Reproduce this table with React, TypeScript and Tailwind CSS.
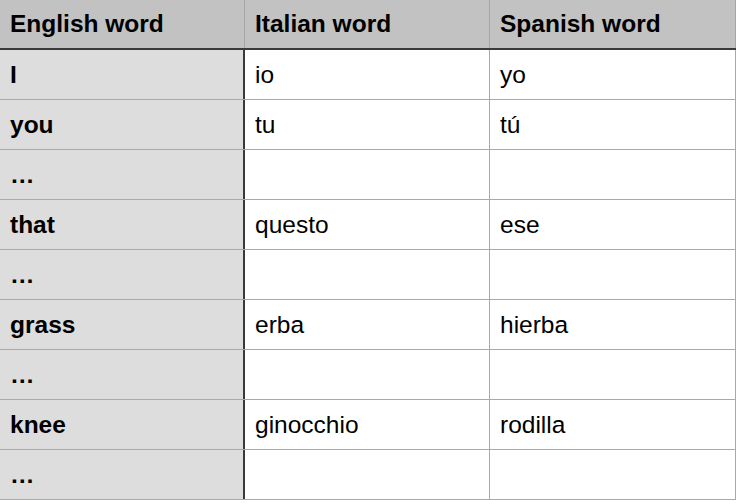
const rows: [string, string, string][] = [
  ["I", "io", "yo"],
  ["you", "tu", "tú"],
  ["...", "", ""],
  ["that", "questo", "ese"],
  ["...", "", ""],
  ["grass", "erba", "hierba"],
  ["...", "", ""],
  ["knee", "ginocchio", "rodilla"],
  ["...", "", ""],
];

const font = { fontFamily: '"Liberation Sans", Arial, sans-serif' };

export default function App() {
  return (
    <div className="w-[736px] h-[504px] bg-white text-[24.5px] text-black" style={font}>
      <div className="flex h-[50px] bg-[#c1c2c1] border-b-2 border-[#3a3a3a] font-bold">
        <div className="w-[245px] flex items-center pl-[10px] border-r border-[#a5a6a5]">English word</div>
        <div className="w-[245px] flex items-center pl-[10px] border-r border-[#a5a6a5]">Italian word</div>
        <div className="w-[246px] flex items-center pl-[10px] border-r border-[#a5a6a5]">Spanish word</div>
      </div>
      {rows.map((r, i) => (
        <div key={i} className="flex h-[50px] border-b border-[#a9a9a9]">
          <div className="w-[245px] flex items-center pl-[10px] pt-[2px] bg-[#dddddd] font-bold border-r-2 border-[#3a3a3a]">
            {r[0] === "..." ? "…" : r[0]}
          </div>
          <div className="w-[245px] flex items-center pl-[10px] pt-[2px] border-r border-[#a9a9a9]">{r[1]}</div>
          <div className="w-[246px] flex items-center pl-[10px] pt-[2px] border-r border-[#a9a9a9]">{r[2]}</div>
        </div>
      ))}
    </div>
  );
}
